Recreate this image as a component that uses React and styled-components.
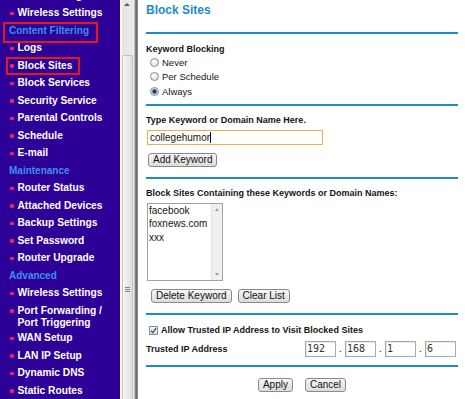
import styled, { createGlobalStyle, css } from "styled-components";

const GlobalStyle = createGlobalStyle`
  html, body {
    margin: 0;
    padding: 0;
    background: #fff;
  }
  body {
    font-family: "Liberation Sans", Arial, sans-serif;
    overflow: hidden;
  }
`;

const Page = styled.div`
  display: flex;
  width: 465px;
  height: 399px;
  overflow: hidden;
`;

/* ---------- left menu ---------- */

const Sidebar = styled.nav`
  width: 120px;
  flex: none;
  background: #2d0097;
  overflow: hidden;
`;

const MenuList = styled.ul`
  list-style: none;
  margin: -13px 0 0;
  padding: 0;
`;

const MenuItem = styled.li`
  position: relative;
  display: flex;
  align-items: flex-start;
  padding: 2.5px 0 ${(p) => (p.$tight ? 0 : 2.5)}px 10px;
  font-size: 10.2px;
  font-weight: bold;
  line-height: 12.5px;
  color: #fff;
  white-space: nowrap;

  ${(p) =>
    p.$box &&
    css`
      &::after {
        content: "";
        position: absolute;
        left: ${p.$box[0]}px;
        top: ${p.$box[1]}px;
        width: ${p.$box[2]}px;
        height: ${p.$box[3]}px;
        box-sizing: border-box;
        border: 2.5px solid #e8151f;
      }
    `}
`;

const MenuHeader = styled(MenuItem)`
  padding-left: 9px;
  font-size: 10px;
  color: #3a92ec;
`;

const Bullet = styled.span`
  flex: none;
  width: 3.5px;
  height: 3.5px;
  margin: 4.5px 4px 0 0;
  border-radius: 50%;
  background: #e3286c;
  box-shadow: 0 0 1px #e3286c;
`;

const ScrollBar = styled.div`
  width: 15px;
  flex: none;
  display: flex;
  flex-direction: column;
  align-items: center;
  background: linear-gradient(to right, #fbfbfb 0 2px, #e4e4e4 2px, #ececec 100%);
  border-right: 1px solid #c2c2c2;
  box-sizing: border-box;
`;

const ScrollArrow = styled.span`
  margin-top: 3px;
  width: 0;
  height: 0;
  border-left: 3px solid transparent;
  border-right: 3px solid transparent;
  border-bottom: 3px solid #5a5a5a;
`;

const Thumb = styled.div`
  margin-top: 49px;
  width: 11px;
  flex: 1;
  display: flex;
  flex-direction: column;
  align-items: center;
  box-sizing: border-box;
  border: 1px solid #c4c4c4;
  border-bottom: none;
  border-radius: 2px 2px 0 0;
  background: linear-gradient(to right, #f8f8f8, #dedede);
`;

const Grip = styled.span`
  margin-top: 231px;
  width: 5px;
  height: 5px;
  background: repeating-linear-gradient(to bottom, #808080 0 1px, transparent 1px 2px);
`;

const Frame = styled.div`
  width: 3px;
  flex: none;
  background: linear-gradient(to right, #8c8c8c, #666 60%, #a8a8a8);
`;

/* ---------- main panel ---------- */

const Main = styled.main`
  flex: 1;
  min-width: 0;
  padding: 0 7px 0 8px;
  color: #151515;
`;

const Title = styled.h1`
  margin: 0;
  padding-top: 3px;
  font-size: 12px;
  line-height: 14px;
  font-weight: bold;
  color: #1d8cc8;
`;

const Rule = styled.hr`
  margin: ${(p) => p.$mt}px 0 0;
  border: 0;
  height: 2px;
  background: #1b8ec3;
`;

const Label = styled.div`
  margin-top: ${(p) => p.$mt || 0}px;
  font-size: 9px;
  font-weight: bold;
  line-height: 12px;
`;

const RadioRow = styled.label`
  display: flex;
  align-items: center;
  gap: 3px;
  height: 14.5px;
  padding-left: 4px;
  font-size: 9.5px;
`;

const RadioDot = styled.span`
  flex: none;
  width: 9px;
  height: 9px;
  box-sizing: border-box;
  border-radius: 50%;
  border: 1px solid #8d8d8d;
  background: ${(p) =>
    p.$on
      ? "radial-gradient(circle, #1d3556 0 1.6px, #7f9cc4 2.2px, #e8edf4 3.5px)"
      : "radial-gradient(circle at 40% 35%, #ffffff, #d6d6d6)"};
`;

const TextField = styled.div`
  margin: 4px 0 0 1px;
  width: 176px;
  height: 15px;
  box-sizing: border-box;
  display: flex;
  align-items: center;
  padding: 0 2px;
  border: 1px solid #e0b25a;
  font-size: 10px;
`;

const Caret = styled.span`
  width: 1px;
  height: 11px;
  background: #000;
`;

const ButtonRow = styled.div`
  display: flex;
  gap: ${(p) => p.$gap || 6}px;
  margin: ${(p) => p.$mt}px 0 0 ${(p) => p.$ml || 0}px;
  justify-content: ${(p) => (p.$center ? "center" : "flex-start")};
`;

const Button = styled.button`
  height: 14px;
  padding: 0 4px;
  box-sizing: border-box;
  font: 10px/12px "Liberation Sans", Arial, sans-serif;
  color: #111;
  border: 1px solid #8a8a8a;
  border-radius: 3px;
  background: linear-gradient(#f7f7f7, #dcdcdc);
`;

const ListBox = styled.div`
  margin: 4px 0 0 1px;
  width: 76px;
  height: 78px;
  box-sizing: border-box;
  display: flex;
  border: 1px solid #a3a3a3;
  font-size: 10px;
`;

const ListItems = styled.ul`
  flex: 1;
  list-style: none;
  margin: 0;
  padding: 0 0 0 1px;
  line-height: 13.3px;
`;

const ListScroll = styled.div`
  width: 11px;
  display: flex;
  flex-direction: column;
  justify-content: space-between;
  align-items: center;
  padding: 4px 0;
  box-sizing: border-box;
  background: #efefef;
  border-left: 1px solid #e0e0e0;
`;

const Tri = styled.span`
  width: 0;
  height: 0;
  border-left: 2.5px solid transparent;
  border-right: 2.5px solid transparent;
  ${(p) => (p.$down ? "border-top" : "border-bottom")}: 3px solid #a0a0a0;
`;

const CheckRow = styled.label`
  display: flex;
  align-items: center;
  gap: 3px;
  margin-top: 9px;
  padding-left: 3px;
  font-size: 9px;
  font-weight: bold;
  line-height: 12px;
`;

const CheckBox = styled.span`
  flex: none;
  width: 9px;
  height: 9px;
  box-sizing: border-box;
  display: flex;
  align-items: center;
  justify-content: center;
  border: 1px solid #8f8f8f;
  background: linear-gradient(#f4f4f4, #d9d9d9);
`;

const IpRow = styled.div`
  display: flex;
  align-items: center;
  justify-content: space-between;
  height: 16px;
  margin-top: 5px;
`;

const IpGroup = styled.div`
  display: flex;
  align-items: center;
  margin-right: 2px;
`;

const IpBox = styled.span`
  width: 31px;
  height: 16px;
  box-sizing: border-box;
  padding-left: 1px;
  border: 1px solid #a9a9a9;
  box-shadow: inset 1px 1px 0 #e6e6e6;
  font: 10px/14px "DejaVu Sans Mono", monospace;
  color: #333;
`;

const IpDot = styled.span`
  width: 9px;
  text-align: center;
  font-size: 10px;
  line-height: 14px;
`;

const menu = [
  { label: "Basic Settings" },
  { label: "Wireless Settings" },
  { label: "Content Filtering", header: true, box: [3, 0, 95, 21] },
  { label: "Logs" },
  { label: "Block Sites", box: [6, 0, 74, 18] },
  { label: "Block Services" },
  { label: "Security Service" },
  { label: "Parental Controls" },
  { label: "Schedule" },
  { label: "E-mail" },
  { label: "Maintenance", header: true },
  { label: "Router Status" },
  { label: "Attached Devices" },
  { label: "Backup Settings" },
  { label: "Set Password" },
  { label: "Router Upgrade" },
  { label: "Advanced", header: true },
  { label: "Wireless Settings" },
  { label: ["Port Forwarding /", "Port Triggering"] },
  { label: "WAN Setup" },
  { label: "LAN IP Setup" },
  { label: "Dynamic DNS" },
  { label: "Static Routes" },
];

const blocked = ["facebook", "foxnews.com", "xxx"];
const trustedIp = ["192", "168", "1", "6"];

const App = () => {
  return (
    <Page>
      <GlobalStyle />
      <Sidebar>
        <MenuList>
          {menu.map((m, i) =>
            m.header ? (
              <MenuHeader key={i} $box={m.box}>
                {m.label}
              </MenuHeader>
            ) : (
              <MenuItem key={i} $box={m.box} $tight={Array.isArray(m.label)}>
                <Bullet />
                <span>
                  {Array.isArray(m.label) ? (
                    <>
                      {m.label[0]}
                      <br />
                      {m.label[1]}
                    </>
                  ) : (
                    m.label
                  )}
                </span>
              </MenuItem>
            )
          )}
        </MenuList>
      </Sidebar>
      <ScrollBar>
        <ScrollArrow />
        <Thumb>
          <Grip />
        </Thumb>
      </ScrollBar>
      <Frame />

      <Main>
        <Title>Block Sites</Title>
        <Rule $mt={15} />

        <Label $mt={9}>Keyword Blocking</Label>
        <div>
          <RadioRow>
            <RadioDot />
            Never
          </RadioRow>
          <RadioRow>
            <RadioDot />
            Per Schedule
          </RadioRow>
          <RadioRow>
            <RadioDot $on />
            Always
          </RadioRow>
        </div>
        <Rule $mt={5.5} />

        <Label $mt={8}>Type Keyword or Domain Name Here.</Label>
        <TextField>
          collegehumor
          <Caret />
        </TextField>
        <ButtonRow $mt={8} $ml={2}>
          <Button>Add Keyword</Button>
        </ButtonRow>
        <Rule $mt={10} />

        <Label $mt={8}>Block Sites Containing these Keywords or Domain Names:</Label>
        <ListBox>
          <ListItems>
            {blocked.map((b) => (
              <li key={b}>{b}</li>
            ))}
          </ListItems>
          <ListScroll>
            <Tri />
            <Tri $down />
          </ListScroll>
        </ListBox>
        <ButtonRow $mt={8} $ml={5}>
          <Button>Delete Keyword</Button>
          <Button>Clear List</Button>
        </ButtonRow>
        <Rule $mt={10} />

        <CheckRow>
          <CheckBox>
            <svg width="7" height="7" viewBox="0 0 7 7">
              <path d="M1 3.6 L2.8 5.6 L6.2 0.8" fill="none" stroke="#2d5e9c" strokeWidth="1.3" />
            </svg>
          </CheckBox>
          Allow Trusted IP Address to Visit Blocked Sites
        </CheckRow>
        <IpRow>
          <Label>Trusted IP Address</Label>
          <IpGroup>
            {trustedIp.map((part, i) => (
              <span key={i} style={{ display: "contents" }}>
                {i > 0 && <IpDot>.</IpDot>}
                <IpBox>{part}</IpBox>
              </span>
            ))}
          </IpGroup>
        </IpRow>
        <Rule $mt={8} />

        <ButtonRow $mt={11} $gap={12} $center>
          <Button>Apply</Button>
          <Button>Cancel</Button>
        </ButtonRow>
      </Main>
    </Page>
  );
};

export default App;
